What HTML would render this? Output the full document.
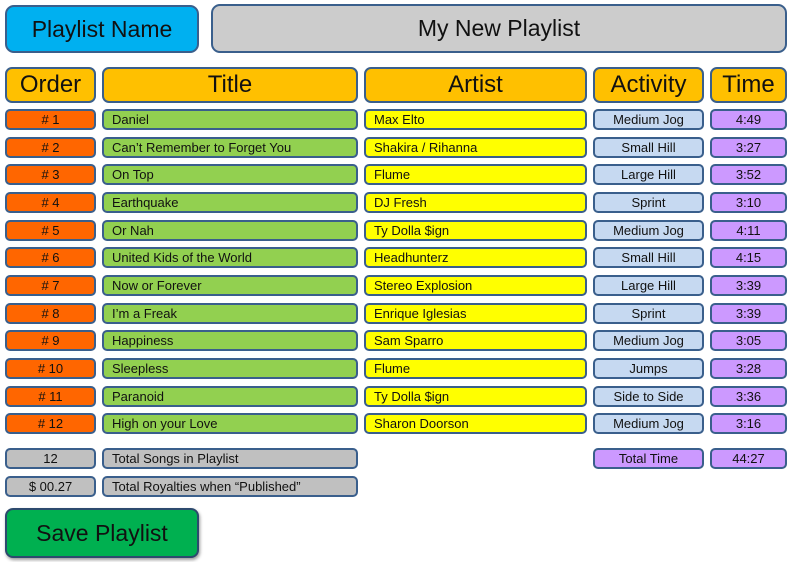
<!DOCTYPE html>
<html><head><meta charset="utf-8"><style>
body{margin:0;width:793px;height:562px;background:#fff;position:relative;overflow:hidden;font-family:"Liberation Sans",sans-serif;color:#111}
.b{position:absolute;box-sizing:border-box;border:2px solid #3a5f8c;border-radius:5px;font-size:13px;line-height:17px;white-space:nowrap;overflow:hidden}
.c{text-align:center}.l{padding-left:8px}
.o{left:5px;width:91px;background:#ff6600}
.t{left:102px;width:256px;background:#92d050}
.a{left:364px;width:223px;background:#ffff00}
.v{left:593px;width:111px;background:#c6d9f1}
.m{left:710px;width:77px;background:#cc99ff}
.h{top:67px;height:36px;background:#ffc000;font-size:24px;line-height:32px;text-align:center;border-radius:7px}
.g{background:#c0c0c0}
</style></head><body>
<div class="b c" style="left:5px;top:5px;width:194px;height:48px;background:#00b0f0;border-radius:9px;font-size:23px;line-height:44px">Playlist Name</div>
<div class="b c" style="left:211px;top:4px;width:576px;height:49px;background:#cccccc;border-radius:9px;font-size:23px;line-height:45px">My New Playlist</div>
<div class="b h" style="left:5px;width:91px">Order</div>
<div class="b h" style="left:102px;width:256px">Title</div>
<div class="b h" style="left:364px;width:223px">Artist</div>
<div class="b h" style="left:593px;width:111px">Activity</div>
<div class="b h" style="left:710px;width:77px">Time</div>

<div style="position:absolute;top:109px;left:0;width:793px;height:21px">
<div class="b c o" style="top:0;height:21px"># 1</div><div class="b l t" style="top:0;height:21px">Daniel</div><div class="b l a" style="top:0;height:21px">Max Elto</div><div class="b c v" style="top:0;height:21px">Medium Jog</div><div class="b c m" style="top:0;height:21px">4:49</div></div>
<div style="position:absolute;top:137px;left:0;width:793px;height:21px">
<div class="b c o" style="top:0;height:21px"># 2</div><div class="b l t" style="top:0;height:21px">Can’t Remember to Forget You</div><div class="b l a" style="top:0;height:21px">Shakira / Rihanna</div><div class="b c v" style="top:0;height:21px">Small Hill</div><div class="b c m" style="top:0;height:21px">3:27</div></div>
<div style="position:absolute;top:164px;left:0;width:793px;height:21px">
<div class="b c o" style="top:0;height:21px"># 3</div><div class="b l t" style="top:0;height:21px">On Top</div><div class="b l a" style="top:0;height:21px">Flume</div><div class="b c v" style="top:0;height:21px">Large Hill</div><div class="b c m" style="top:0;height:21px">3:52</div></div>
<div style="position:absolute;top:192px;left:0;width:793px;height:21px">
<div class="b c o" style="top:0;height:21px"># 4</div><div class="b l t" style="top:0;height:21px">Earthquake</div><div class="b l a" style="top:0;height:21px">DJ Fresh</div><div class="b c v" style="top:0;height:21px">Sprint</div><div class="b c m" style="top:0;height:21px">3:10</div></div>
<div style="position:absolute;top:220px;left:0;width:793px;height:21px">
<div class="b c o" style="top:0;height:21px"># 5</div><div class="b l t" style="top:0;height:21px">Or Nah</div><div class="b l a" style="top:0;height:21px">Ty Dolla $ign</div><div class="b c v" style="top:0;height:21px">Medium Jog</div><div class="b c m" style="top:0;height:21px">4:11</div></div>
<div style="position:absolute;top:247px;left:0;width:793px;height:21px">
<div class="b c o" style="top:0;height:21px"># 6</div><div class="b l t" style="top:0;height:21px">United Kids of the World</div><div class="b l a" style="top:0;height:21px">Headhunterz</div><div class="b c v" style="top:0;height:21px">Small Hill</div><div class="b c m" style="top:0;height:21px">4:15</div></div>
<div style="position:absolute;top:275px;left:0;width:793px;height:21px">
<div class="b c o" style="top:0;height:21px"># 7</div><div class="b l t" style="top:0;height:21px">Now or Forever</div><div class="b l a" style="top:0;height:21px">Stereo Explosion</div><div class="b c v" style="top:0;height:21px">Large Hill</div><div class="b c m" style="top:0;height:21px">3:39</div></div>
<div style="position:absolute;top:303px;left:0;width:793px;height:21px">
<div class="b c o" style="top:0;height:21px"># 8</div><div class="b l t" style="top:0;height:21px">I’m a Freak</div><div class="b l a" style="top:0;height:21px">Enrique Iglesias</div><div class="b c v" style="top:0;height:21px">Sprint</div><div class="b c m" style="top:0;height:21px">3:39</div></div>
<div style="position:absolute;top:330px;left:0;width:793px;height:21px">
<div class="b c o" style="top:0;height:21px"># 9</div><div class="b l t" style="top:0;height:21px">Happiness</div><div class="b l a" style="top:0;height:21px">Sam Sparro</div><div class="b c v" style="top:0;height:21px">Medium Jog</div><div class="b c m" style="top:0;height:21px">3:05</div></div>
<div style="position:absolute;top:358px;left:0;width:793px;height:21px">
<div class="b c o" style="top:0;height:21px"># 10</div><div class="b l t" style="top:0;height:21px">Sleepless</div><div class="b l a" style="top:0;height:21px">Flume</div><div class="b c v" style="top:0;height:21px">Jumps</div><div class="b c m" style="top:0;height:21px">3:28</div></div>
<div style="position:absolute;top:386px;left:0;width:793px;height:21px">
<div class="b c o" style="top:0;height:21px"># 11</div><div class="b l t" style="top:0;height:21px">Paranoid</div><div class="b l a" style="top:0;height:21px">Ty Dolla $ign</div><div class="b c v" style="top:0;height:21px">Side to Side</div><div class="b c m" style="top:0;height:21px">3:36</div></div>
<div style="position:absolute;top:413px;left:0;width:793px;height:21px">
<div class="b c o" style="top:0;height:21px"># 12</div><div class="b l t" style="top:0;height:21px">High on your Love</div><div class="b l a" style="top:0;height:21px">Sharon Doorson</div><div class="b c v" style="top:0;height:21px">Medium Jog</div><div class="b c m" style="top:0;height:21px">3:16</div></div>

<div class="b c g" style="left:5px;width:91px;top:448px;height:21px">12</div>
<div class="b l g" style="left:102px;width:256px;top:448px;height:21px">Total Songs in Playlist</div>
<div class="b c m" style="left:593px;width:111px;top:448px;height:21px">Total Time</div>
<div class="b c m" style="top:448px;height:21px">44:27</div>
<div class="b c g" style="left:5px;width:91px;top:476px;height:21px">$ 00.27</div>
<div class="b l g" style="left:102px;width:256px;top:476px;height:21px">Total Royalties when “Published”</div>
<div class="b c" style="left:5px;top:508px;width:194px;height:50px;background:#00b050;border-radius:8px;border-color:#2d4a6e;font-size:23px;line-height:46px;box-shadow:1px 2px 3px rgba(0,0,0,.4)">Save Playlist</div>
</body></html>
